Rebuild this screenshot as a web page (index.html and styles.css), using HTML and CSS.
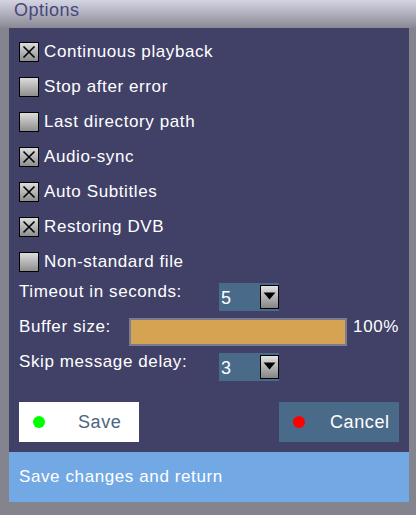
FILE: index.html
```html
<!DOCTYPE html>
<html>
<head>
<meta charset="utf-8">
<link rel="stylesheet" href="styles.css">
</head>
<body>
<div class="window">
  <div class="title">Options</div>
  <div class="panel">
    <div class="list">
      <div class="row"><span class="check on"><svg viewBox="0 0 18 18"><path d="M3.5 3.5L14.5 14.5M14.5 3.5L3.5 14.5"/></svg></span><span class="label">Continuous playback</span></div>
      <div class="row"><span class="check"></span><span class="label">Stop after error</span></div>
      <div class="row"><span class="check"></span><span class="label">Last directory path</span></div>
      <div class="row"><span class="check on"><svg viewBox="0 0 18 18"><path d="M3.5 3.5L14.5 14.5M14.5 3.5L3.5 14.5"/></svg></span><span class="label">Audio-sync</span></div>
      <div class="row"><span class="check on"><svg viewBox="0 0 18 18"><path d="M3.5 3.5L14.5 14.5M14.5 3.5L3.5 14.5"/></svg></span><span class="label">Auto Subtitles</span></div>
      <div class="row"><span class="check on"><svg viewBox="0 0 18 18"><path d="M3.5 3.5L14.5 14.5M14.5 3.5L3.5 14.5"/></svg></span><span class="label">Restoring DVB</span></div>
      <div class="row"><span class="check"></span><span class="label">Non-standard file</span></div>
      <div class="row field">
        <span class="flabel">Timeout in seconds:</span>
        <span class="select"><span class="value">5</span><span class="arrow"><svg viewBox="0 0 17 22"><path d="M2.5 6.5H14.5L8.5 13.5Z"/></svg></span></span>
      </div>
      <div class="row field">
        <span class="flabel short">Buffer size:</span>
        <span class="bar"><span class="fill" style="width:100%"></span></span>
        <span class="pct">100%</span>
      </div>
      <div class="row field">
        <span class="flabel">Skip message delay:</span>
        <span class="select"><span class="value">3</span><span class="arrow"><svg viewBox="0 0 17 22"><path d="M2.5 6.5H14.5L8.5 13.5Z"/></svg></span></span>
      </div>
    </div>
    <div class="buttons">
      <div class="btn save"><span class="dot green"></span><span class="btext">Save</span></div>
      <div class="btn cancel"><span class="dot red"></span><span class="btext">Cancel</span></div>
    </div>
    <div class="status">Save changes and return</div>
  </div>
</div>
</body>
</html>
```
FILE: styles.css
```css
html, body {
  margin: 0;
  padding: 0;
}
body {
  width: 416px;
  height: 515px;
  background: #84848e;
  font-family: "Liberation Sans", Arial, sans-serif;
  overflow: hidden;
}
.window {
  display: flex;
  flex-direction: column;
  height: 515px;
  background: linear-gradient(to bottom, #d4d4e2 0px, #b4b4c2 12px, #8c8c98 27px, #84848e 28px);
}
.title {
  height: 28px;
  box-sizing: border-box;
  padding-left: 14px;
  font-size: 18px;
  line-height: 20px;
  letter-spacing: 0.5px;
  color: #47477a;
}
.panel {
  margin: 0 7px 13px 9px;
  flex: 1;
  background: #414168;
  display: flex;
  flex-direction: column;
  padding-top: 6px;
}
.list {
  display: flex;
  flex-direction: column;
  padding: 0 10px;
}
.row {
  height: 35px;
  display: flex;
  align-items: center;
  color: #ffffff;
  font-size: 17px;
  letter-spacing: 0.6px;
}
.check {
  width: 18px;
  height: 18px;
  border: 1px solid #000;
  background: linear-gradient(to bottom, #dcdcdc, #8e8e8e);
  display: flex;
  margin-right: 5px;
  flex: none;
}
.check svg {
  width: 18px;
  height: 18px;
}
.check path {
  stroke: #000;
  stroke-width: 1.6;
  fill: none;
}
.label {
  line-height: 20px;
}
.flabel {
  width: 200px;
  flex: none;
  padding-bottom: 9px;
}
.flabel.short {
  width: 110px;
}
.select {
  width: 60px;
  height: 28px;
  background: #4a6a8a;
  display: flex;
  align-items: center;
  justify-content: space-between;
  font-size: 18px;
}
.value {
  padding-left: 2px;
  padding-top: 3px;
}
.arrow {
  width: 17px;
  height: 22px;
  border: 1px solid #000;
  background: linear-gradient(to bottom, #e2e2e2, #858585);
  display: flex;
}
.arrow svg {
  width: 17px;
  height: 22px;
}
.arrow path {
  fill: #000;
}
.bar {
  width: 216px;
  height: 24px;
  border: 2px solid #7c7c8e;
  display: flex;
  background: #414168;
}
.fill {
  background: #d4a453;
  height: 100%;
}
.pct {
  margin-left: 6px;
  padding-bottom: 9px;
}
.buttons {
  display: flex;
  justify-content: space-between;
  padding: 0 10px;
  margin-top: 18px;
}
.btn {
  width: 120px;
  height: 40px;
  display: flex;
  align-items: center;
  padding-left: 14px;
  box-sizing: border-box;
  font-size: 18px;
  letter-spacing: 0.6px;
}
.btn.save {
  background: #ffffff;
  color: #4b6580;
}
.btn.cancel {
  background: #4a6a8a;
  color: #ffffff;
}
.dot {
  width: 12px;
  height: 12px;
  border-radius: 50%;
  flex: none;
}
.dot.green { background: #00ff00; }
.dot.red { background: #ff0000; }
.save .btext { margin-left: 33px; }
.cancel .btext { margin-left: 25px; }
.status {
  margin-top: 10px;
  flex: 1;
  background: #72a9e4;
  color: #ffffff;
  font-size: 17px;
  letter-spacing: 0.6px;
  display: flex;
  align-items: center;
  padding-left: 10px;
}
```
